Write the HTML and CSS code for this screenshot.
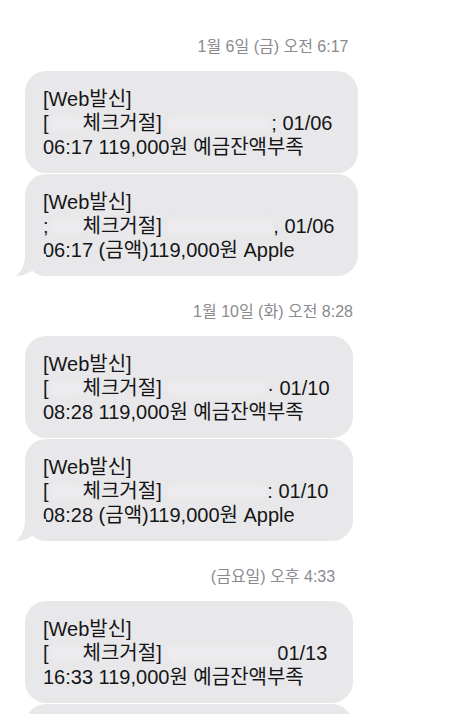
FILE: index.html
```html
<!DOCTYPE html>
<html lang="ko">
<head>
<meta charset="utf-8">
<title>메시지</title>
<link rel="stylesheet" href="styles.css">
</head>
<body>
<main class="thread">
  <section class="group first">
    <div class="stamp">1월 6일 (금) 오전 6:17</div>
    <div class="bubble wide">
      <span class="ln">[Web발신]</span>
      <span class="ln">[<span class="blot b-a"></span>체크거절] <span class="blot b-e"></span>; 01/06</span>
      <span class="ln">06:17 119,000원 예금잔액부족</span>
    </div>
    <div class="bubble wide tailed">
      <span class="ln">[Web발신]</span>
      <span class="ln">;<span class="blot b-a"></span>체크거절] <span class="blot b-c"></span>, 01/06</span>
      <span class="ln">06:17 (금액)119,000원 Apple</span>
      <svg class="tail" viewBox="0 0 30 22" width="30" height="22" aria-hidden="true"><path d="M9 0 C9 10 6 17 0 22 C6 22 12 20 17 16 C20 19 24 21 30 22 L30 0 Z"/></svg>
    </div>
  </section>

  <section class="group">
    <div class="stamp">1월 10일 (화) 오전 8:28</div>
    <div class="bubble">
      <span class="ln">[Web발신]</span>
      <span class="ln">[<span class="blot b-a"></span>체크거절] <span class="blot b-b"></span>· 01/10</span>
      <span class="ln">08:28 119,000원 예금잔액부족</span>
    </div>
    <div class="bubble tailed">
      <span class="ln">[Web발신]</span>
      <span class="ln">[<span class="blot b-a"></span>체크거절] <span class="blot b-b"></span>: 01/10</span>
      <span class="ln">08:28 (금액)119,000원 Apple</span>
      <svg class="tail" viewBox="0 0 30 22" width="30" height="22" aria-hidden="true"><path d="M9 0 C9 10 6 17 0 22 C6 22 12 20 17 16 C20 19 24 21 30 22 L30 0 Z"/></svg>
    </div>
  </section>

  <section class="group">
    <div class="stamp">(금요일) 오후 4:33</div>
    <div class="bubble">
      <span class="ln">[Web발신]</span>
      <span class="ln">[<span class="blot b-a"></span>체크거절] <span class="blot b-d"></span>01/13</span>
      <span class="ln">16:33 119,000원 예금잔액부족</span>
    </div>
    <div class="bubble stub" aria-hidden="true"></div>
  </section>
</main>
</body>
</html>
```

FILE: styles.css
```css
html, body {
  margin: 0;
  padding: 0;
  background: #ffffff;
}

body {
  width: 474px;
  height: 714px;
  overflow: hidden;
  font-family: "Liberation Sans", "Noto Sans CJK KR", sans-serif;
}

.thread {
  display: flex;
  flex-direction: column;
  padding-top: 38px;
}

.group {
  display: flex;
  flex-direction: column;
  gap: 1px;
  margin-top: 27px;
}

.group.first {
  margin-top: 0;
}

.stamp {
  padding-left: 72px;
  text-align: center;
  font-size: 16px;
  line-height: 18px;
  height: 18px;
  color: #8a8a8f;
  margin-bottom: 14px;
}

.bubble {
  position: relative;
  margin-left: 25px;
  width: 328px;
  box-sizing: border-box;
  padding: 16px 8px 14px 18px;
  background: #e8e8ea;
  border-radius: 21px;
  color: #151517;
  font-size: 20px;
}

.bubble.wide {
  width: 333px;
}

.bubble.stub {
  height: 102px;
  flex-shrink: 0;
}

.ln {
  display: block;
  height: 24px;
  line-height: 24px;
  white-space: nowrap;
}

.blot {
  display: inline-block;
  height: 15px;
  vertical-align: -1px;
  background: #ececee;
  border-radius: 7px;
  filter: blur(2px);
}

.b-a { width: 34px; }
.b-b { width: 100px; }
.b-c { width: 106px; }
.b-d { width: 110px; }
.b-e { width: 104px; }

.tail {
  position: absolute;
  left: -9px;
  bottom: 0;
  fill: #e8e8ea;
}
```
